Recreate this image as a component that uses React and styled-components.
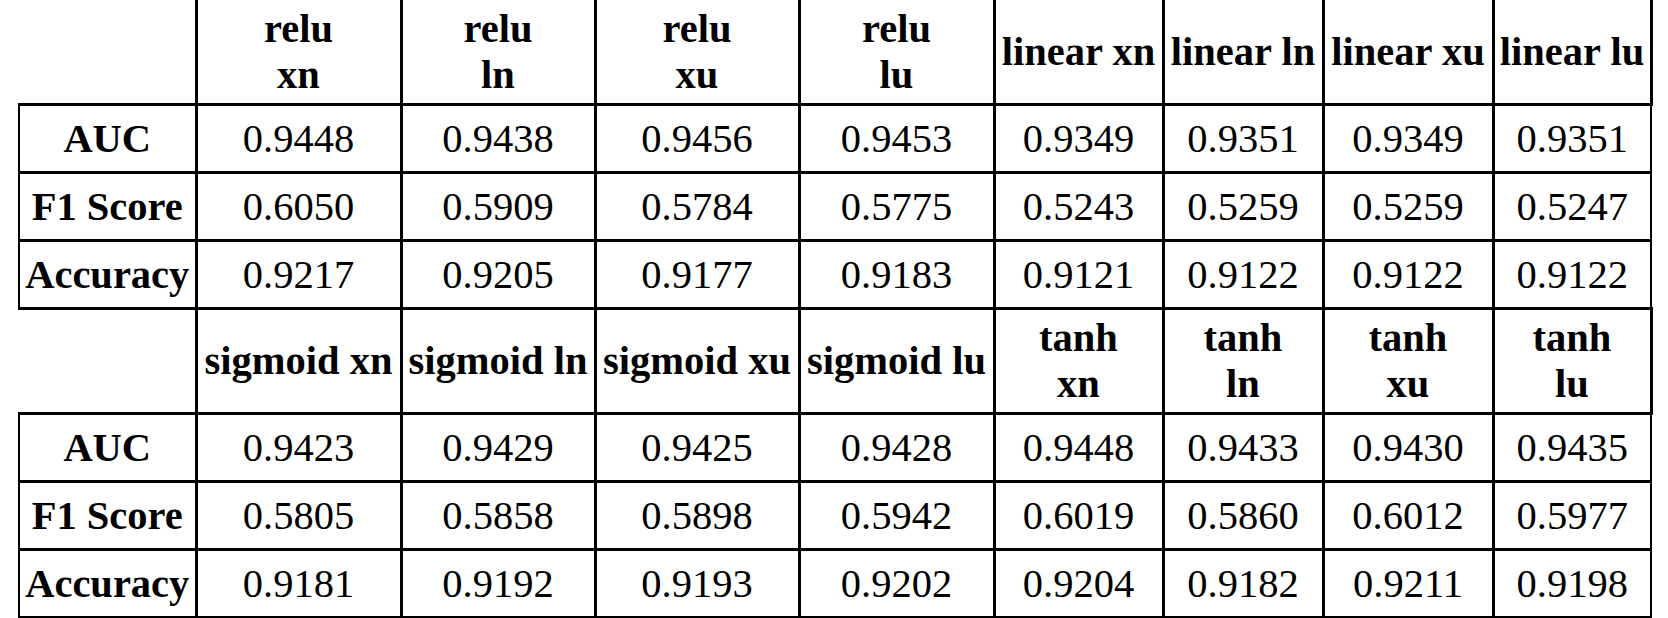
import React from "react";
import styled, { createGlobalStyle } from "styled-components";

const Global = createGlobalStyle`
  html, body { margin: 0; padding: 0; background: #fff; }
  body { font-family: "Liberation Serif", "Times New Roman", serif; color: #000; }
`;

const serif = `"Liberation Serif", "Times New Roman", serif`;

const Table = styled.table`
  border-collapse: collapse;
  table-layout: fixed;
  margin: -2px 0 0 18px;
  font-family: ${serif};
  font-size: 40.5px;
  line-height: 46px;
  color: #000;
`;

const HeadCell = styled.th`
  font-family: ${serif};
  border: 3px solid #000;
  padding: 5px 3px;
  font-weight: bold;
  text-align: center;
  white-space: pre-line;
  ${(p) => p.$open && `border-top-color: transparent;`}
  ${(p) => p.$blank && `border: none;`}
`;

const LabelCell = styled.th`
  font-family: ${serif};
  border: 3px solid #000;
  border-left-width: 2px;
  padding: 9.5px 2px;
  font-weight: bold;
  text-align: center;
  white-space: nowrap;
`;

const ValueCell = styled.td`
  font-family: ${serif};
  font-weight: normal;
  border: 3px solid #000;
  padding: 9.5px 3px;
  text-align: center;
  ${(p) => p.$last && `border-right-width: 2px;`}
`;

const widths = [177, 205, 194, 204, 195, 169, 160, 170, 158];

const groups = [
  {
    headers: [
      "relu\nxn", "relu\nln", "relu\nxu", "relu\nlu",
      "linear xn", "linear ln", "linear xu", "linear lu",
    ],
    rows: [
      ["AUC", ["0.9448", "0.9438", "0.9456", "0.9453", "0.9349", "0.9351", "0.9349", "0.9351"]],
      ["F1 Score", ["0.6050", "0.5909", "0.5784", "0.5775", "0.5243", "0.5259", "0.5259", "0.5247"]],
      ["Accuracy", ["0.9217", "0.9205", "0.9177", "0.9183", "0.9121", "0.9122", "0.9122", "0.9122"]],
    ],
  },
  {
    headers: [
      "sigmoid xn", "sigmoid ln", "sigmoid xu", "sigmoid lu",
      "tanh\nxn", "tanh\nln", "tanh\nxu", "tanh\nlu",
    ],
    rows: [
      ["AUC", ["0.9423", "0.9429", "0.9425", "0.9428", "0.9448", "0.9433", "0.9430", "0.9435"]],
      ["F1 Score", ["0.5805", "0.5858", "0.5898", "0.5942", "0.6019", "0.5860", "0.6012", "0.5977"]],
      ["Accuracy", ["0.9181", "0.9192", "0.9193", "0.9202", "0.9204", "0.9182", "0.9211", "0.9198"]],
    ],
  },
];

export default function App() {
  return (
    <>
      <Global />
      <Table>
        <colgroup>
          {widths.map((w, i) => (
            <col key={i} style={{ width: w }} />
          ))}
        </colgroup>
        <tbody>
          {groups.map((g, gi) => (
            <React.Fragment key={gi}>
              <tr>
                <HeadCell $blank />
                {g.headers.map((h) => (
                  <HeadCell key={h} $open={gi === 0}>{h}</HeadCell>
                ))}
              </tr>
              {g.rows.map(([label, vals]) => (
                <tr key={label}>
                  <LabelCell>{label}</LabelCell>
                  {vals.map((v, i) => (
                    <ValueCell key={i} $last={i === vals.length - 1}>{v}</ValueCell>
                  ))}
                </tr>
              ))}
            </React.Fragment>
          ))}
        </tbody>
      </Table>
    </>
  );
}
